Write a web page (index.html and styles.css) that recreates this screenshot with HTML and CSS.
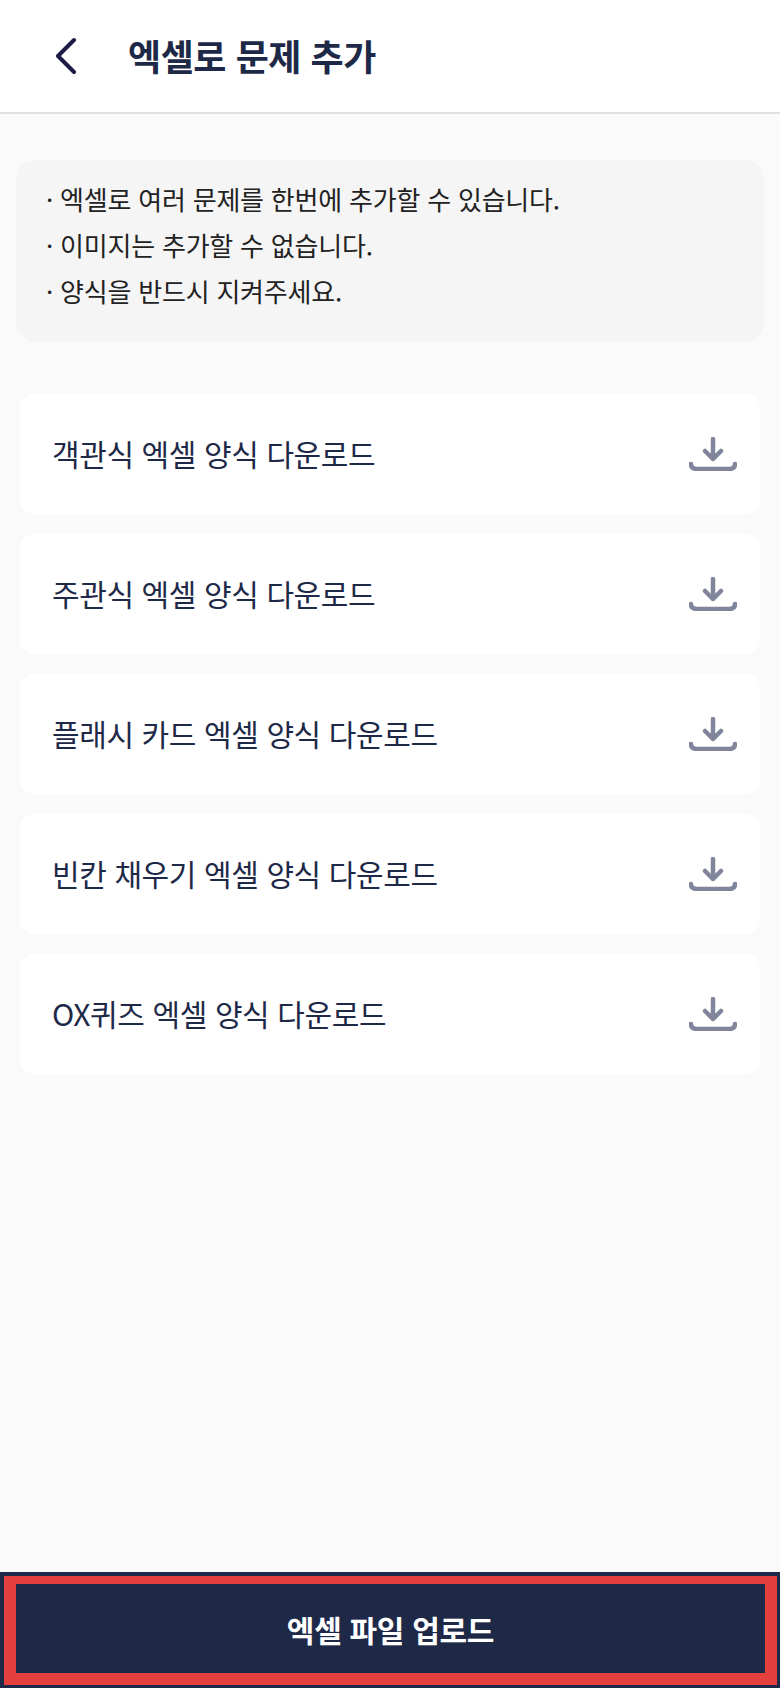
FILE: index.html
```html
<!DOCTYPE html>
<html lang="ko">
<head>
  <meta charset="UTF-8" />
  <title>엑셀로 문제 추가</title>
  <link rel="stylesheet" href="styles.css">
</head>
<body>
  <header class="top-bar">
    <button class="back-button" aria-label="뒤로">
      <svg width="24" height="38" viewBox="0 0 24 38"><path d="M22 3 L6 19 L22 35" /></svg>
    </button>
    <h1>엑셀로 문제 추가</h1>
  </header>

  <main class="content">
    <ul class="notice">
      <li>· 엑셀로 여러 문제를 한번에 추가할 수 있습니다.</li>
      <li>· 이미지는 추가할 수 없습니다.</li>
      <li>· 양식을 반드시 지켜주세요.</li>
    </ul>

    <div class="download-list">
      <a class="download-item">
        <span>객관식 엑셀 양식 다운로드</span>
        <svg class="download-icon" viewBox="0 0 48 34"><path d="M24 2 V22 M16 14 L24 22 L32 14 M2 27 Q2 32 8 32 H40 Q46 32 46 27" /></svg>
      </a>
      <a class="download-item">
        <span>주관식 엑셀 양식 다운로드</span>
        <svg class="download-icon" viewBox="0 0 48 34"><path d="M24 2 V22 M16 14 L24 22 L32 14 M2 27 Q2 32 8 32 H40 Q46 32 46 27" /></svg>
      </a>
      <a class="download-item">
        <span>플래시 카드 엑셀 양식 다운로드</span>
        <svg class="download-icon" viewBox="0 0 48 34"><path d="M24 2 V22 M16 14 L24 22 L32 14 M2 27 Q2 32 8 32 H40 Q46 32 46 27" /></svg>
      </a>
      <a class="download-item">
        <span>빈칸 채우기 엑셀 양식 다운로드</span>
        <svg class="download-icon" viewBox="0 0 48 34"><path d="M24 2 V22 M16 14 L24 22 L32 14 M2 27 Q2 32 8 32 H40 Q46 32 46 27" /></svg>
      </a>
      <a class="download-item">
        <span>OX퀴즈 엑셀 양식 다운로드</span>
        <svg class="download-icon" viewBox="0 0 48 34"><path d="M24 2 V22 M16 14 L24 22 L32 14 M2 27 Q2 32 8 32 H40 Q46 32 46 27" /></svg>
      </a>
    </div>
  </main>

  <footer class="bottom-bar">
    <button class="upload-button">엑셀 파일 업로드</button>
  </footer>
</body>
</html>
```

FILE: styles.css
```css
* {
  box-sizing: border-box;
}

html, body {
  height: 100%;
}

body {
  margin: 0;
  display: flex;
  flex-direction: column;
  font-family: "Noto Sans CJK KR", "Noto Sans", sans-serif;
  background-color: #fafafa;
  color: #1e2948;
}

/* 상단 바 */
.top-bar {
  height: 114px;
  display: flex;
  align-items: center;
  padding-left: 52px;
  background-color: #fff;
  border-bottom: 2px solid #e2e2e2;
}

.back-button {
  display: flex;
  width: 24px;
  padding: 0;
  border: none;
  background: none;
}

.back-button path {
  fill: none;
  stroke: #1a1c45;
  stroke-width: 4;
  stroke-linecap: round;
  stroke-linejoin: round;
}

h1 {
  margin: 0 0 3px 52px;
  font-size: 36px;
  font-weight: 700;
  letter-spacing: -0.45px;
}

.content {
  flex: 1;
  padding: 46px 16px 0;
}

/* 안내 문구 */
.notice {
  margin: 0;
  padding: 16px 30px 28px;
  list-style: none;
  background-color: #f5f5f5;
  border-radius: 20px;
  font-size: 26px;
  line-height: 46px;
  letter-spacing: -0.22px;
  color: #222;
}

/* 양식 다운로드 목록 */
.download-list {
  display: flex;
  flex-direction: column;
  gap: 20px;
  margin: 52px 4px 0;
}

.download-item {
  height: 120px;
  display: flex;
  align-items: center;
  justify-content: space-between;
  padding: 0 23px 2px 32px;
  background-color: #fff;
  border-radius: 14px;
  font-size: 30px;
  font-weight: 400;
  letter-spacing: -0.4px;
}

.download-icon {
  width: 48px;
  height: 34px;
  margin-top: 2px;
  fill: none;
  stroke: #80859c;
  stroke-width: 4.5;
  stroke-linecap: round;
  stroke-linejoin: round;
}

/* 하단 버튼 */
.bottom-bar {
  padding: 4px 3px 3px 4px;
  background-color: #1e2948;
}

.upload-button {
  display: block;
  width: 100%;
  height: 109px;
  border: solid #e4403d;
  border-width: 8px 12px 12px;
  background-color: #1e2948;
  color: #fff;
  font-family: inherit;
  font-size: 30px;
  font-weight: 700;
  letter-spacing: -0.3px;
}
```
